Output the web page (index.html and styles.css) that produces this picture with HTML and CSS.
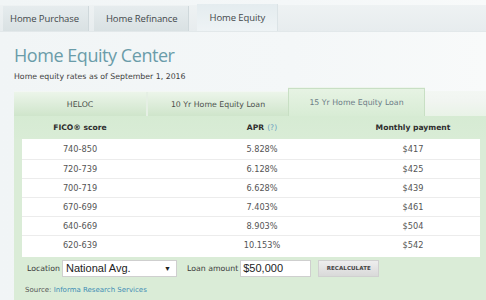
FILE: index.html
```html
<!DOCTYPE html>
<html>
<head>
<meta charset="utf-8">
<link rel="stylesheet" href="styles.css">
</head>
<body>
<nav class="topnav">
  <a class="ttab">Home Purchase</a>
  <a class="ttab">Home Refinance</a>
  <a class="ttab active">Home Equity</a>
</nav>
<h1 class="title">Home Equity Center</h1>
<p class="asof">Home equity rates as of September 1, 2016</p>
<section class="panel">
  <div class="itabs">
    <div class="itab t1">HELOC</div>
    <div class="itab t2">10 Yr Home Equity Loan</div>
    <div class="itab t3 active">15 Yr Home Equity Loan</div>
  </div>
  <div class="thead">
    <div class="c1">FICO® score</div>
    <div class="c2">APR <span class="q">(?)</span></div>
    <div class="c3">Monthly payment</div>
  </div>
  <div class="tbody">
    <div class="row"><div class="c1">740-850</div><div class="c2">5.828%</div><div class="c3">$417</div></div>
    <div class="row"><div class="c1">720-739</div><div class="c2">6.128%</div><div class="c3">$425</div></div>
    <div class="row"><div class="c1">700-719</div><div class="c2">6.628%</div><div class="c3">$439</div></div>
    <div class="row"><div class="c1">670-699</div><div class="c2">7.403%</div><div class="c3">$461</div></div>
    <div class="row"><div class="c1">640-669</div><div class="c2">8.903%</div><div class="c3">$504</div></div>
    <div class="row"><div class="c1">620-639</div><div class="c2">10.153%</div><div class="c3">$542</div></div>
  </div>
  <div class="controls">
    <span class="lbl">Location</span>
    <div class="select"><span>National Avg.</span><span class="arrow">▼</span></div>
    <span class="lbl loan">Loan amount</span>
    <div class="input">$50,000</div>
    <div class="btn">RECALCULATE</div>
  </div>
  <div class="source">Source: <a class="link">Informa Research Services</a></div>
</section>
</body>
</html>
```
FILE: styles.css
```css
html, body { margin: 0; padding: 0; }
body {
  width: 486px; height: 300px; overflow: hidden;
  background: linear-gradient(90deg, #f1f5f6 0%, #f4f7f8 60%, #f8fafa 100%);
  font-family: "DejaVu Sans", "Liberation Sans", sans-serif;
  color: #444;
}
.topnav {
  margin-top: 5px;
  height: 26px;
  display: flex;
  align-items: flex-end;
  padding-left: 3px;
  gap: 5px;
  background: linear-gradient(#eef2f3, #e7ecee);
  border-bottom: 1px solid #e2e8ea;
}
.ttab {
  height: 25px;
  display: flex; align-items: center;
  padding: 0 9px 0 7px;
  font-family: "Open Sans", "DejaVu Sans", sans-serif;
  font-size: 9.5px;
  letter-spacing: -0.1px;
  color: #43484b;
  background: linear-gradient(#e6ecee, #d9e1e3);
  border-right: 1px solid #cfd8db;
}
.ttab:nth-child(2) { padding: 0 10px 0 12px; }
.ttab.active {
  height: 27px;
  margin-left: 3px;
  padding: 0 12px 0 13px;
  background: linear-gradient(#e4ecef, #eef3f5);
  border-right: 1px solid #dbe3e6;
}
.title {
  margin: 11px 0 0 14px;
  font-family: "Open Sans", "DejaVu Sans", sans-serif;
  font-weight: 400;
  font-size: 18px;
  line-height: 24px;
  color: #6a9ca9;
  letter-spacing: -0.45px;
}
.asof {
  margin: 4px 0 0 14px;
  font-size: 7.8px;
  line-height: 12px;
  color: #3d3d3d;
}
.panel {
  margin: 8px 0 0 14px;
  background: #daecd7;
  height: 210px;
}
.itabs {
  display: flex;
  height: 25px;
  align-items: flex-end;
  background: linear-gradient(#f3f7f3, #f1f5f1 40%, #e9f3e7);
}
.itab {
  height: 24px;
  display: flex; align-items: center; justify-content: center;
  font-size: 7.8px;
  color: #4c514c;
  background: linear-gradient(#ecf5ea, #cfe5cb);
  box-sizing: border-box;
}
.t1 { width: 134px; border-right: 2px solid #e5efe4; }
.t2 { width: 140px; }
.t3 {
  width: 137px; height: 28px;
  margin-top: -3px;
  color: #6c7c86;
  background: linear-gradient(#e6f3e3, #d8ecd5);
  border: 1px solid #c8dfc4;
  border-bottom: none;
  box-shadow: 0 -1px 0 #eef5ed;
}
.thead, .row {
  display: grid;
  grid-template-columns: 116px 248px 94px;
  align-items: center;
  white-space: nowrap;
}
.c1, .c2, .c3 { display: flex; justify-content: center; }
.thead {
  height: 23px;
  padding-left: 8px;
  font-size: 7.6px;
  font-weight: bold;
  color: #2e2e2e;
  background: linear-gradient(#d6ebd3, #d9ecd6);
}
.thead .c3, .row .c3 { padding-right: 40px; }
.q { color: #6a9fc0; font-weight: normal; margin-left: 3px; }
.tbody {
  margin-left: 8px;
  width: 458px;
  padding-bottom: 3px;
  background: #ffffff;
}
.row {
  height: 19px;
  font-size: 8.2px;
  color: #555;
  box-sizing: border-box;
  border-top: 1px solid #ececec;
}
.row:first-child { border-top: none; height: 20px; }
.controls {
  display: flex;
  align-items: center;
  height: 22px;
  margin-top: 0;
  padding-left: 13px;
}
.lbl { font-size: 7.8px; color: #3b3b3b; margin-right: 2px; }
.loan { margin-left: 10px; }
.select {
  width: 115px; height: 17px;
  box-sizing: border-box;
  display: flex; align-items: center; justify-content: space-between;
  padding: 0 5px 0 3px;
  background: #fff;
  border: 1px solid #cfcfcf;
  font-family: "Liberation Sans", Arial, sans-serif;
  font-size: 11px; color: #222;
}
.arrow { font-size: 7px; color: #222; }
.input {
  width: 71px; height: 17px;
  box-sizing: border-box;
  padding-left: 2px;
  display: flex; align-items: center;
  background: #fff;
  border: 1px solid #cfcfcf;
  font-family: "Liberation Sans", Arial, sans-serif;
  font-size: 11px; color: #222;
}
.btn {
  margin-left: 7px;
  width: 61px; height: 17px;
  box-sizing: border-box;
  display: flex; align-items: center; justify-content: center;
  background: linear-gradient(#eeeeee, #d9d9d9);
  border: 1px solid #d0d0d0;
  font-size: 5.5px; font-weight: bold; color: #444;
  letter-spacing: 0.1px;
}
.source {
  margin: 7px 0 0 11px;
  font-size: 7px;
  color: #555;
}
.link { color: #3f8db5; }
```
